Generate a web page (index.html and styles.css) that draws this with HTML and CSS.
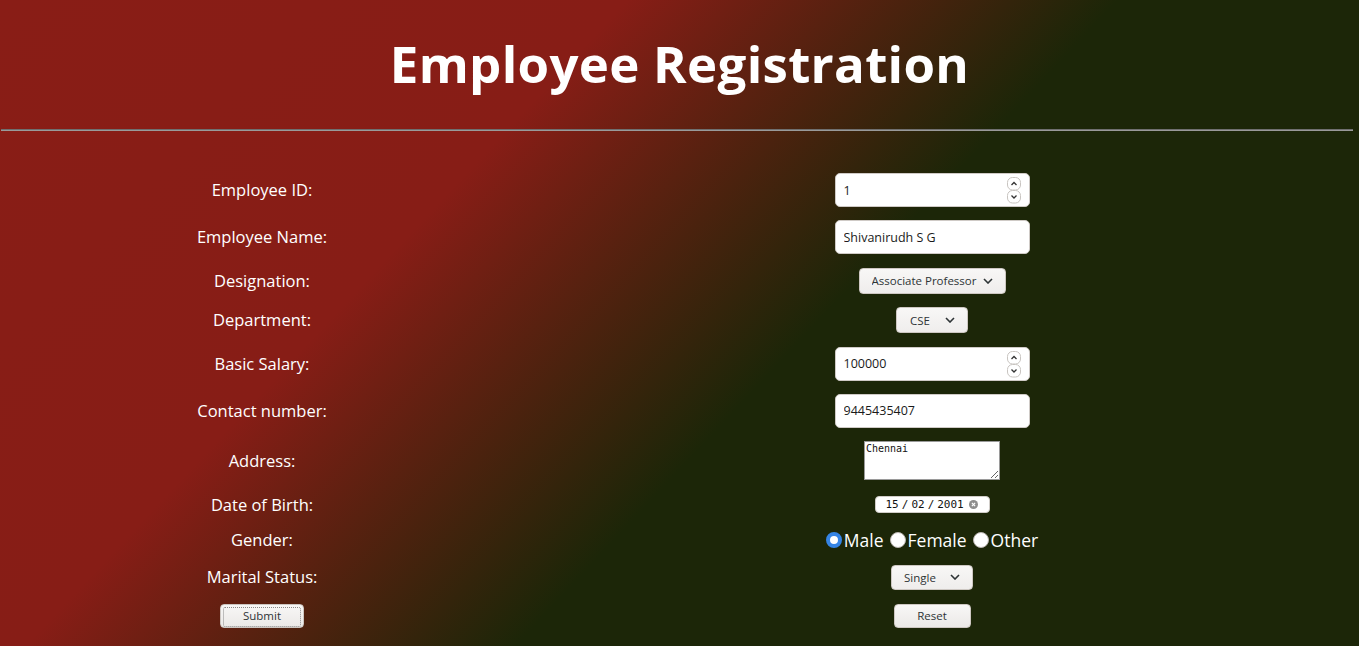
FILE: index.html
```html
<!DOCTYPE html>
<html lang="en">
<head>
<meta charset="utf-8">
<title>Employee Registration</title>
<link rel="stylesheet" href="styles.css">
</head>
<body>
<h1 class="title">Employee Registration</h1>
<hr class="rule">
<form class="form">
  <label class="label">Employee ID:</label>
  <div class="field">
    <span class="spin-wrap">
      <input class="text-input" type="text" value="1">
      <svg class="spinner" width="14" height="27" viewBox="0 0 14 27">
        <rect x="0.5" y="0.5" width="13" height="12.5" rx="5" fill="#fff" stroke="#c8c4c0"/>
        <rect x="0.5" y="13.5" width="13" height="12.5" rx="5" fill="#fff" stroke="#c8c4c0"/>
        <path d="M4.5 8 L7 5.5 L9.5 8" fill="none" stroke="#333" stroke-width="1.3"/>
        <path d="M4.5 18.5 L7 21 L9.5 18.5" fill="none" stroke="#333" stroke-width="1.3"/>
      </svg>
    </span>
  </div>

  <label class="label">Employee Name:</label>
  <div class="field"><input class="text-input" type="text" value="Shivanirudh S G"></div>

  <label class="label">Designation:</label>
  <div class="field">
    <span class="select-wrap">
      <select class="select select-wide"><option>Associate Professor</option></select>
      <svg class="chev" width="10" height="6" viewBox="0 0 10 6"><path d="M1 1 L5 5 L9 1" fill="none" stroke="#2e3436" stroke-width="1.6"/></svg>
    </span>
  </div>

  <label class="label">Department:</label>
  <div class="field">
    <span class="select-wrap">
      <select class="select select-cse"><option>CSE</option></select>
      <svg class="chev" width="10" height="6" viewBox="0 0 10 6"><path d="M1 1 L5 5 L9 1" fill="none" stroke="#2e3436" stroke-width="1.6"/></svg>
    </span>
  </div>

  <label class="label">Basic Salary:</label>
  <div class="field">
    <span class="spin-wrap">
      <input class="text-input" type="text" value="100000">
      <svg class="spinner" width="14" height="27" viewBox="0 0 14 27">
        <rect x="0.5" y="0.5" width="13" height="12.5" rx="5" fill="#fff" stroke="#c8c4c0"/>
        <rect x="0.5" y="13.5" width="13" height="12.5" rx="5" fill="#fff" stroke="#c8c4c0"/>
        <path d="M4.5 8 L7 5.5 L9.5 8" fill="none" stroke="#333" stroke-width="1.3"/>
        <path d="M4.5 18.5 L7 21 L9.5 18.5" fill="none" stroke="#333" stroke-width="1.3"/>
      </svg>
    </span>
  </div>

  <label class="label">Contact number:</label>
  <div class="field"><input class="text-input" type="text" value="9445435407"></div>

  <label class="label">Address:</label>
  <div class="field"><textarea class="area">Chennai</textarea></div>

  <label class="label">Date of Birth:</label>
  <div class="field field-date">
    <span class="date"><span>15</span><span class="slash">/</span><span>02</span><span class="slash">/</span><span>2001</span>
      <svg class="clear" width="9" height="9" viewBox="0 0 10 10"><circle cx="5" cy="5" r="5" fill="#8d8d8d"/><path d="M3.2 3.2 L6.8 6.8 M6.8 3.2 L3.2 6.8" stroke="#fff" stroke-width="1.3"/></svg>
    </span>
  </div>

  <label class="label">Gender:</label>
  <div class="field radios">
    <label class="radio-item"><input class="radio" type="radio" name="g" checked>Male</label>
    <label class="radio-item"><input class="radio" type="radio" name="g">Female</label>
    <label class="radio-item"><input class="radio" type="radio" name="g">Other</label>
  </div>

  <label class="label">Marital Status:</label>
  <div class="field">
    <span class="select-wrap">
      <select class="select select-single"><option>Single</option></select>
      <svg class="chev" width="10" height="6" viewBox="0 0 10 6"><path d="M1 1 L5 5 L9 1" fill="none" stroke="#2e3436" stroke-width="1.6"/></svg>
    </span>
  </div>

  <div class="field field-btn"><button class="btn btn-submit" type="button"><span class="focus">Submit</span></button></div>
  <div class="field field-btn"><button class="btn btn-reset" type="reset">Reset</button></div>
</form>
</body>
</html>
```

FILE: styles.css
```css
html, body {
  margin: 0;
  padding: 0;
}
body {
  height: 646px;
  overflow: hidden;
  background: linear-gradient(133deg, #891d16 0%, #871d16 32%, #1c2608 57%, #1c2608 100%);
  font-family: "Open Sans", "Noto Sans", sans-serif;
  color: #fff;
}
.title {
  margin: 0;
  padding-top: 28px;
  height: 101px;
  box-sizing: border-box;
  text-align: center;
  font-size: 51px;
  line-height: 70px;
  font-weight: 700;
  letter-spacing: 0.3px;
}
.rule {
  margin: 28px 6px 0 1px;
  border: 0;
  border-top: 1px solid #6f6f6f;
  border-bottom: 1px solid #9a9a9a;
  height: 0;
}
.form {
  display: grid;
  grid-template-columns: 524px 816px;
  row-gap: 13.4px;
  align-items: center;
  padding-top: 42px;
}
.label {
  text-align: center;
  font-size: 16.5px;
  line-height: 20px;
}
.field {
  display: flex;
  justify-content: center;
  align-items: center;
  min-height: 20px;
}
.field-date {
  min-height: 22px;
}
.field-btn {
  min-height: 26px;
}
.text-input {
  width: 195px;
  height: 34px;
  box-sizing: border-box;
  border: 1px solid #cfcac6;
  border-radius: 5px;
  background: #fff;
  padding: 0 8px;
  font-family: "Open Sans", "Noto Sans", sans-serif;
  font-size: 12.5px;
  color: #1a1a1a;
  outline: none;
}
.spin-wrap, .select-wrap {
  position: relative;
  display: inline-block;
  line-height: 0;
}
.spinner {
  position: absolute;
  right: 9px;
  top: 4px;
}
.select {
  -webkit-appearance: none;
  appearance: none;
  height: 26px;
  box-sizing: border-box;
  border: 1px solid #cdc7c2;
  border-radius: 4px;
  background: linear-gradient(#f8f7f6, #efedec);
  font-family: "Open Sans", "Noto Sans", sans-serif;
  font-size: 11.5px;
  color: #2e3436;
  padding: 0 0 0 12px;
  outline: none;
}
.select-wide { width: 147px; }
.select-cse { width: 72px; padding-left: 13px; }
.select-single { width: 82px; height: 25px; padding-left: 12px; }
.chev {
  position: absolute;
  right: 13px;
  top: 50%;
  margin-top: -3px;
}
.area {
  width: 136px;
  height: 39px;
  box-sizing: border-box;
  border: 1px solid #9a9a9a;
  border-radius: 0;
  background: #fff;
  font-family: "DejaVu Sans Mono", "Liberation Mono", monospace;
  font-size: 10px;
  line-height: 13px;
  padding: 0 1px;
  color: #111;
  resize: both;
}
.date {
  display: inline-flex;
  align-items: center;
  width: 115px;
  height: 17px;
  box-sizing: border-box;
  background: #fff;
  border: 1px solid #d0ccc8;
  border-radius: 4px;
  padding-left: 10px;
  font-family: "DejaVu Sans Mono", "Liberation Mono", monospace;
  font-size: 11px;
  color: #111;
  line-height: 15px;
  white-space: nowrap;
}
.slash {
  margin: 0 3px;
}
.clear {
  margin-left: 5px;
}
.radios {
  gap: 0;
}
.radio-item {
  display: inline-flex;
  align-items: center;
  font-size: 17.5px;
  line-height: 22px;
  margin-right: 6px;
}
.radio-item:last-child {
  margin-right: 0;
}
.radio {
  -webkit-appearance: none;
  appearance: none;
  width: 16px;
  height: 16px;
  margin: 0 2px 0 0;
  border-radius: 50%;
  border: 1px solid #b9b4b0;
  background: #fff;
  box-sizing: border-box;
}
.radio:checked {
  background: #fff;
  border: 4px solid #3584e4;
}
.btn {
  height: 24px;
  box-sizing: border-box;
  border: 1px solid #cdc7c2;
  border-radius: 4px;
  background: linear-gradient(#f8f7f6, #ebe9e7);
  font-family: "Open Sans", "Noto Sans", sans-serif;
  font-size: 11.5px;
  color: #2e3436;
  padding: 0;
}
.btn-submit {
  width: 84px;
  padding: 2px;
}
.focus {
  display: block;
  height: 18px;
  line-height: 16px;
  border: 1px dotted #888;
  border-radius: 2px;
}
.btn-reset {
  width: 77px;
}
```
